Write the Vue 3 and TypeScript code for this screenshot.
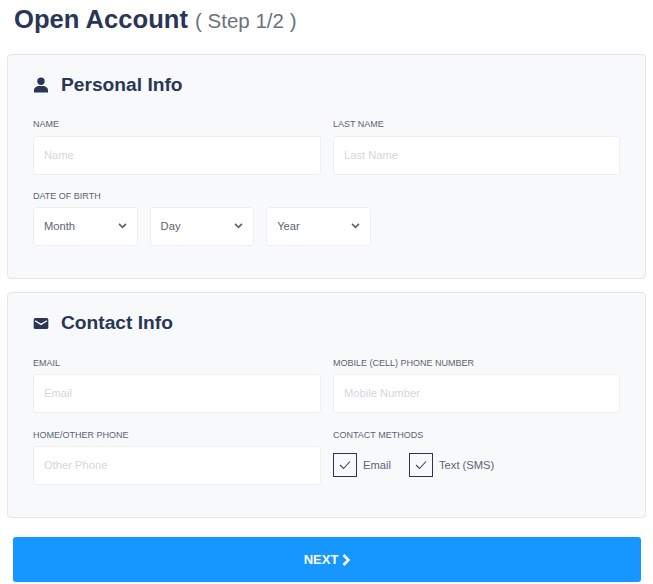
<script setup lang="ts">
const dobParts = ["Month", "Day", "Year"];
const contactMethods = ["Email", "Text (SMS)"];
</script>

<template>
  <div class="page">
    <h1 class="title">Open Account <span class="step">( Step 1/2 )</span></h1>

    <section class="panel personal">
      <h2 class="panel-title">
        <svg class="icon" viewBox="0 0 16 16" width="16" height="16">
          <circle cx="8" cy="4.2" r="3.7" fill="#2a3655" />
          <path d="M1 15.6v-2.3C1 10.6 3.6 9 6 9h4c2.4 0 5 1.6 5 4.3v2.3z" fill="#2a3655" />
        </svg>
        Personal Info
      </h2>
      <div class="row two">
        <div class="field">
          <label>NAME</label>
          <input class="text" placeholder="Name" />
        </div>
        <div class="field">
          <label>LAST NAME</label>
          <input class="text" placeholder="Last Name" />
        </div>
      </div>
      <div class="field dob">
        <label>DATE OF BIRTH</label>
        <div class="selects">
          <div v-for="part in dobParts" :key="part" class="select">
            {{ part }}
            <svg viewBox="0 0 10 7" width="9" height="6"><path d="M1 1l4 4 4-4" fill="none" stroke="#5b6472" stroke-width="2" /></svg>
          </div>
        </div>
      </div>
    </section>

    <section class="panel contact">
      <h2 class="panel-title">
        <svg class="icon" viewBox="0 0 16 12" width="15" height="11">
          <rect width="16" height="12" rx="2" fill="#2a3655" />
          <path d="M1.5 3l6.5 4 6.5-4" fill="none" stroke="#f7f9fb" stroke-width="1.5" />
        </svg>
        Contact Info
      </h2>
      <div class="row two">
        <div class="field">
          <label>EMAIL</label>
          <input class="text" placeholder="Email" />
        </div>
        <div class="field">
          <label>MOBILE (CELL) PHONE NUMBER</label>
          <input class="text" placeholder="Mobile Number" />
        </div>
      </div>
      <div class="row two second">
        <div class="field">
          <label>HOME/OTHER PHONE</label>
          <input class="text" placeholder="Other Phone" />
        </div>
        <div class="field">
          <label>CONTACT METHODS</label>
          <div class="checks">
            <div v-for="method in contactMethods" :key="method" class="check">
              <span class="box"><svg viewBox="0 0 12 10" width="12" height="10"><path d="M1 5l3.5 3.5L11 1.5" fill="none" stroke="#3a4560" stroke-width="1.1" /></svg></span>
              {{ method }}
            </div>
          </div>
        </div>
      </div>
    </section>

    <button class="next">
      NEXT
      <svg viewBox="0 0 8 12" width="8" height="12"><path d="M1.5 1l5 5-5 5" fill="none" stroke="#fff" stroke-width="2.6" /></svg>
    </button>
  </div>
</template>

<style scoped>
.page {
  width: 653px;
  height: 584px;
  overflow: hidden;
  box-sizing: border-box;
  padding: 0 7px;
  font-family: "Liberation Sans", Arial, sans-serif;
  background: #fff;
}

.title {
  margin: 0;
  padding: 3px 0 0 7px;
  height: 54px;
  box-sizing: border-box;
  font-size: 25.6px;
  line-height: 33px;
  font-weight: 700;
  color: #2a3655;
}

.step {
  font-size: 20.5px;
  font-weight: 400;
  color: #6b7280;
}

.panel {
  box-sizing: border-box;
  width: 639px;
  background: #f7f9fb;
  border: 1px solid #e2e5ea;
  border-radius: 4px;
  padding: 0 25px;
}

.personal {
  height: 225px;
  margin-bottom: 13px;
}

.contact {
  height: 226px;
}

.panel-title {
  display: flex;
  align-items: center;
  margin: 15px 0 19px;
  height: 30px;
  font-size: 19.2px;
  font-weight: 700;
  color: #2a3655;
}

.personal .panel-title {
  margin-bottom: 18px;
}

.personal .row label {
  margin-bottom: 6px;
}

.icon {
  width: 16px;
  margin-right: 12px;
}

.row.two {
  display: grid;
  grid-template-columns: 288px 287px;
  column-gap: 12px;
}

.second {
  margin-top: 16px;
}

.field label {
  display: block;
  font-size: 9px;
  line-height: 12px;
  color: #5b6472;
  margin-bottom: 5px;
}

.text {
  display: block;
  box-sizing: border-box;
  width: 100%;
  height: 39px;
  background: #fff;
  border: 1px solid #edeff3;
  border-radius: 3px;
  padding: 0 10px 2px;
  font-size: 11.2px;
  font-family: inherit;
  outline: none;
}

.text::placeholder {
  color: #d3d7de;
  opacity: 1;
}

.dob {
  margin-top: 15px;
}

.selects {
  display: flex;
  gap: 12px;
}

.select {
  box-sizing: border-box;
  width: 104.6px;
  height: 39px;
  background: #fff;
  border: 1px solid #edeff3;
  border-radius: 3px;
  padding: 0 10px 2px;
  display: flex;
  align-items: center;
  justify-content: space-between;
  font-size: 11.2px;
  color: #5b6472;
}

.checks {
  display: flex;
  gap: 18px;
  padding-top: 7px;
}

.check {
  display: flex;
  align-items: center;
  gap: 6px;
  font-size: 11.2px;
  color: #5b6472;
}

.box {
  box-sizing: border-box;
  width: 24px;
  height: 24px;
  border: 1px solid #2a3655;
  display: flex;
  align-items: center;
  justify-content: center;
}

.next {
  display: flex;
  align-items: center;
  justify-content: center;
  gap: 4px;
  width: 628px;
  height: 45px;
  margin: 19px 0 0 6px;
  border: none;
  border-radius: 3px;
  background: #1597ff;
  color: #fff;
  font-family: inherit;
  font-size: 13px;
  font-weight: 700;
}
</style>
